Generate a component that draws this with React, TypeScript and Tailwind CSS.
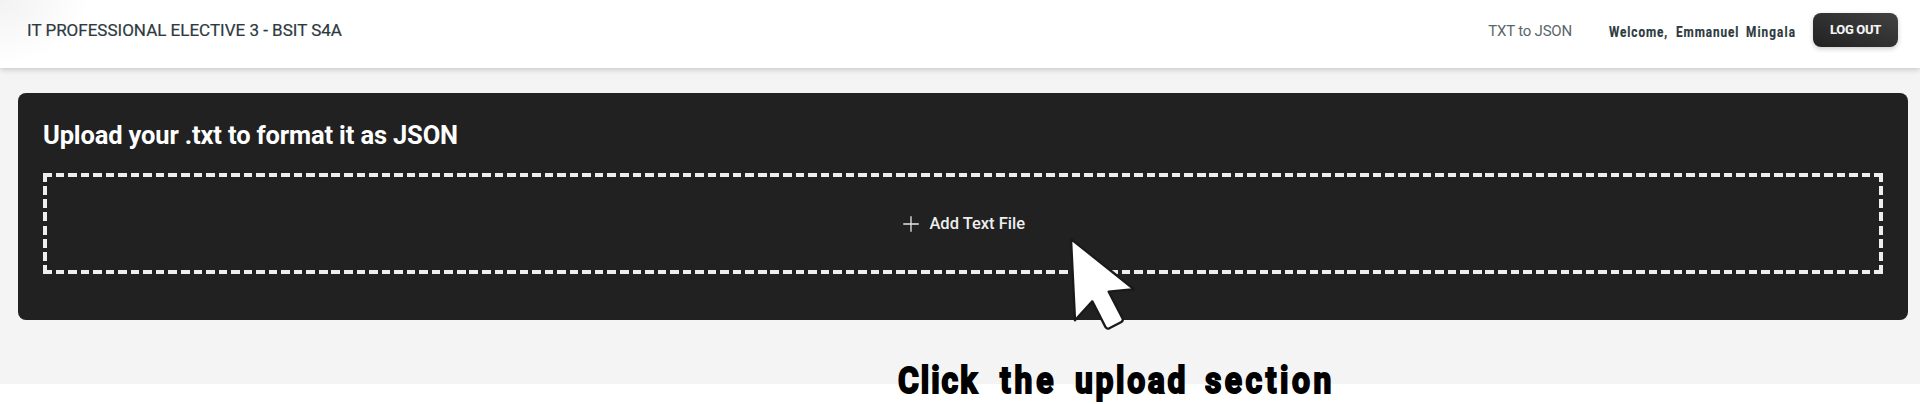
import React from "react";

function Header() {
  return (
    <header className="relative flex h-[68px] shrink-0 items-start justify-between bg-white bg-[radial-gradient(ellipse_90px_64px_at_0_0,#f2f2f2,#ffffff)] pl-[27px] pr-[22px] shadow-[0_1px_6px_rgba(0,0,0,0.22)]">
      <h1 className="mt-[18px] whitespace-nowrap text-[17px] leading-6 font-normal tracking-[0px] text-[#2d3a40] [-webkit-text-stroke:0.2px_#2d3a40]">
        IT PROFESSIONAL ELECTIVE 3 - BSIT S4A
      </h1>
      <nav className="flex items-start">
        <a className="mt-[19px] mr-[37px] whitespace-nowrap text-[15px] leading-6 tracking-[-0.2px] text-[#5b666b]">TXT to JSON</a>
        <div className="mt-5 mr-[17px] flex w-[187px] whitespace-nowrap text-[14px] leading-6 font-bold text-[#2d3a40] [-webkit-text-stroke:0.2px_#2d3a40]">
          <span className="w-[67px]"><span className="inline-block origin-left scale-x-[0.84] tracking-[1.1px]">Welcome,</span></span>
          <span className="w-[70px]"><span className="inline-block origin-left scale-x-[0.84] tracking-[1.1px]">Emmanuel</span></span>
          <span className="w-[50px]"><span className="inline-block origin-left scale-x-[0.84] tracking-[1.3px]">Mingala</span></span>
        </div>
        <button className="mt-[13px] flex h-[34px] w-[85px] items-center justify-center rounded-lg bg-linear-to-tr from-[#212121] to-[#424242] pb-px text-[13px] font-extrabold tracking-[-0.35px] text-[#f4f4f4] shadow-[0_2px_5px_rgba(0,0,0,0.2)]">
          LOG OUT
        </button>
      </nav>
    </header>
  );
}

const dashes =
  "bg-[repeating-linear-gradient(90deg,#efeeed_0_8.6px,transparent_8.6px_12.543px),repeating-linear-gradient(90deg,#efeeed_0_8.6px,transparent_8.6px_12.543px),repeating-linear-gradient(180deg,#efeeed_0_9px,transparent_9px_13.14px),repeating-linear-gradient(180deg,#efeeed_0_9px,transparent_9px_13.14px)] bg-no-repeat bg-[size:100%_4px,100%_4px,4px_100%,4px_100%] bg-[position:0_0,0_100%,0_0,100%_0]";

function UploadPanel() {
  return (
    <section className="mt-[25.4px] mr-[12.5px] ml-[17.7px] h-[226.6px] rounded-lg bg-[#212121] pt-[26.6px] pr-[25px] pl-[25.3px]">
      <h2 className="h-[53px] text-[25.5px] leading-[30px] font-bold tracking-[-0.15px] text-white">
        Upload your .txt to format it as JSON
      </h2>
      <div className={"flex h-[101px] items-center justify-center gap-[10.5px] pt-px pl-[2.5px] " + dashes}>
        <svg className="size-4" viewBox="0 0 16 16" stroke="#e6e6e6" strokeWidth="1.3" strokeLinecap="round">
          <path d="M8 .7v14.6M.7 8h14.6" />
        </svg>
        <span className="text-[16.5px] leading-6 font-medium text-[#eeeeee]">Add Text File</span>
      </div>
    </section>
  );
}

function Pointer() {
  return (
    <svg className="absolute top-[234px] left-[1066px] h-[100px] w-[72px]" viewBox="1066 234 72 100">
      <path
        d="M1071 239 1134 289.2 1108.7 291.6 1122.6 318.5Q1123.4 320.6 1121.4 322L1109.3 328.3Q1107 329.3 1105.6 327.2L1092.3 301.4 1075 320.3Z"
        fill="#fff"
        stroke="#1a1a1a"
        strokeWidth="2.4"
        strokeLinejoin="round"
      />
    </svg>
  );
}

function Caption() {
  return (
    <p className="absolute top-[358.5px] left-[898px] flex h-[46px] w-[440px] whitespace-nowrap text-[37px] leading-[44px] font-bold text-black [-webkit-text-stroke:2px_black]">
      <span className="w-[102px]"><span className="inline-block origin-left scale-x-[0.86] tracking-[2.3px]">Click</span></span>
      <span className="w-[75px]"><span className="inline-block origin-left scale-x-[0.86] tracking-[4.4px]">the</span></span>
      <span className="w-[130px]"><span className="inline-block origin-left scale-x-[0.86] tracking-[3.1px]">upload</span></span>
      <span className="w-[130px]"><span className="inline-block origin-left scale-x-[0.86] tracking-[4.1px]">section</span></span>
    </p>
  );
}

export default function App() {
  return (
    <div className="relative h-[404px] w-full overflow-hidden bg-white font-[Roboto,sans-serif]">
      <main className="flex h-[384px] flex-col bg-[#f4f4f4]">
        <Header />
        <UploadPanel />
      </main>
      <Pointer />
      <Caption />
    </div>
  );
}
